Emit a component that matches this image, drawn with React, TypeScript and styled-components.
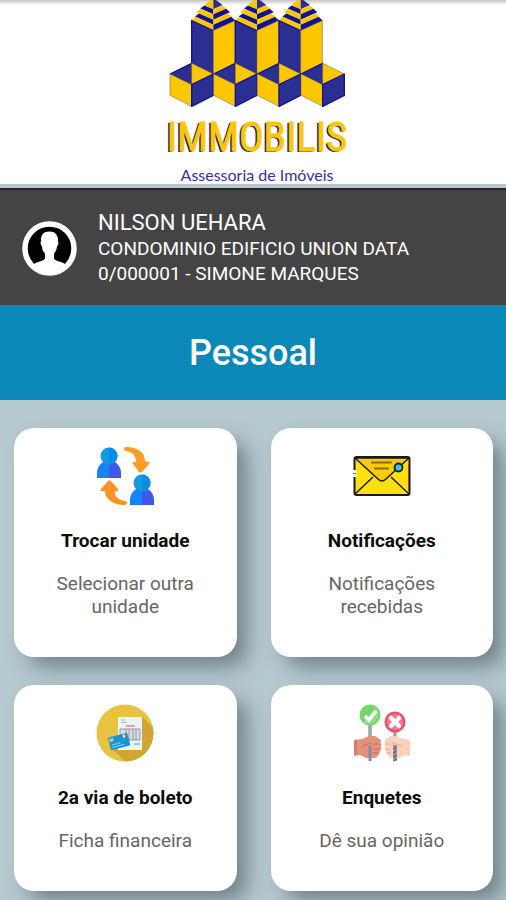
import React from "react";
import styled, { createGlobalStyle } from "styled-components";

const GlobalStyle = createGlobalStyle`
  *, *::before, *::after { box-sizing: border-box; }
  body {
    margin: 0;
    background: #b4c8d0;
    font-family: Roboto, "Liberation Sans", sans-serif;
  }
`;

const Screen = styled.div`
  display: flex;
  flex-direction: column;
  min-height: 100vh;
`;

const BrandBar = styled.header`
  display: flex;
  flex-direction: column;
  align-items: center;
  padding: 0 0 1px 8px;
  background: linear-gradient(#c4c4c4, #ffffff 5px);
`;

const LogoMark = styled.svg`
  display: block;
  width: 176px;
  height: 107px;
  flex: none;
`;

const Wordmark = styled.div`
  color: #fdc608;
  font-family: "Liberation Sans Narrow", "Roboto Condensed", "Open Sans Condensed", Roboto, sans-serif;
  font-size: 41px;
  line-height: 60px;
  -webkit-text-stroke: 1px #fdc608;
  text-shadow: -2px 1px 0 #25257f;
`;

const Tagline = styled.div`
  color: #34349b;
  font-family: Lato, sans-serif;
  font-size: 16px;
  line-height: 16px;
`;

const UserBar = styled.section`
  display: flex;
  align-items: center;
  gap: 21px;
  margin-top: 4px;
  padding: 20px 22px 19px;
  border-top: 2px solid #2b2829;
  background: #444444;
  color: #ffffff;
`;

const Avatar = styled.svg`
  width: 55px;
  height: 55px;
  flex: none;
`;

const UserName = styled.div`
  font-size: 22px;
  line-height: 26px;
`;

const UserDetail = styled.div`
  font-size: 19px;
  line-height: 25px;
`;

const SectionTitle = styled.h1`
  margin: 0;
  padding: 26px 16px 25px;
  background: #0a88b7;
  color: #ffffff;
  font-size: 36px;
  font-weight: 500;
  line-height: 44px;
  text-align: center;
`;

const CardGrid = styled.main`
  display: grid;
  grid-template-columns: 1fr 1fr;
  gap: 28px 34px;
  padding: 28px 13px 8px 14px;
`;

const Card = styled.button`
  display: flex;
  flex-direction: column;
  align-items: center;
  padding: 19px 32px 39px;
  border: 0;
  border-radius: 20px;
  background: #ffffff;
  box-shadow: 12px 12px 20px -2px rgba(60, 75, 82, 0.55);
  font-family: inherit;
  text-align: center;
  cursor: pointer;
`;

const CardIcon = styled.svg`
  width: 58px;
  height: 58px;
  flex: none;
`;

const CardTitle = styled.span`
  margin-top: 24px;
  color: #0c0c0c;
  font-size: 19px;
  font-weight: 700;
  line-height: 24px;
`;

const CardText = styled.span`
  margin-top: 19px;
  color: #666666;
  font-size: 19px;
  line-height: 23px;
`;

const BLUE = "#2c2f92";
const EDGE = "#14128a";
const YELLOW = "#fdc700";

const tiers = [
  { dx: 50, top: 28, bottom: 59 },
  { dx: 66, top: 59, bottom: 92 },
];

function Tower({ c }: { c: number }) {
  const band = (dir: number, dx: number, y1: number, y2: number) => {
    const rise = dx * 0.45;
    return `${c},${y1} ${c + dir * (dx - 12)},${y1 - rise + 6} ${c + dir * dx},${y2 - rise} ${c},${y2}`;
  };
  return (
    <g>
      <polygon points={`${c},-6 ${c - 28},15 ${c},28`} fill={YELLOW} />
      <polygon points={`${c},-6 ${c + 28},15 ${c},28`} fill={BLUE} />
      {tiers.map(({ dx, top, bottom }) => {
        const mid = top + 15;
        return (
          <g key={dx}>
            <polygon points={band(-1, dx - 11, top, mid)} fill={EDGE} />
            <polygon points={band(-1, dx, mid, bottom)} fill={YELLOW} />
            <polygon points={band(1, dx - 11, top, mid)} fill={YELLOW} />
            <polygon points={band(1, dx, mid, bottom)} fill={EDGE} />
          </g>
        );
      })}
      <polygon points={`${c - 65},62 ${c},92 ${c},222 ${c - 65},190`} fill={BLUE} stroke={EDGE} strokeWidth="4" />
      <polygon points={`${c},92 ${c + 65},62 ${c + 65},190 ${c},222`} fill={YELLOW} stroke="#8b7a4c" strokeWidth="2" />
    </g>
  );
}

function Cube({ c }: { c: number }) {
  return (
    <g strokeLinejoin="round">
      <polygon points={`${c - 65},222 ${c},190 ${c},254`} fill={BLUE} stroke={EDGE} strokeWidth="4" />
      <polygon points={`${c},190 ${c + 65},222 ${c},254`} fill={YELLOW} stroke="#8b7a4c" strokeWidth="2" />
      <polygon points={`${c - 65},222 ${c},254 ${c},319 ${c - 65},286`} fill={YELLOW} stroke="#8b7a4c" strokeWidth="2" />
      <polygon points={`${c},254 ${c + 65},222 ${c + 65},286 ${c},319`} fill={BLUE} stroke={EDGE} strokeWidth="4" />
    </g>
  );
}

function Person({ x, y }: { x: number; y: number }) {
  return (
    <g transform={`translate(${x} ${y})`}>
      <path d="M0 31V26C0 20 4 15 9 14h3v17z" fill="#1583fa" />
      <path d="M12 14h3c5 1 9 6 9 12v5H12z" fill="#3b5be6" />
      <circle cx="12" cy="9" r="8.500" fill="#119be4" />
      <path d="M12 .5a8.500 8.500 0 0 1 0 17z" fill="#0b8bea" />
    </g>
  );
}

function SwapIcon() {
  return (
    <CardIcon viewBox="0 0 58 58" aria-hidden="true">
      <Person x={1} y={0} />
      <Person x={34} y={27} />
      <path d="M28 2c0-2 2-2 4-2 11 1 17 6 17 14l3 1c2 0 2 1 1 2l-7 8c-1 1-2 1-3 0l-6-8c-1-1-1-2 1-2h2C40 8 36 5 30 4c-1 0-2-1-2-2z" fill="#fe9d25" />
      <path d="M31 56c0 2-2 2-4 2-12-1-18-7-18-14H6c-2 0-2-1-1-2l7-8c1-1 2-1 3 0l7 8c1 1 1 2-1 2h-2c-1 5 3 9 10 10 1 0 2 1 2 2z" fill="#fd9424" />
    </CardIcon>
  );
}

function EnvelopeIcon() {
  return (
    <CardIcon viewBox="0 0 58 58" aria-hidden="true">
      <rect x="1.500" y="10" width="55" height="38" rx="2" fill="#ffe00a" stroke="#171a22" strokeWidth="2" />
      <path d="M2 47l18-17M56 47L38 30" stroke="#171a22" strokeWidth="1.500" />
      <path d="M2 11l23 21q4 4 8 0l23-21z" fill="#fccb08" stroke="#171a22" strokeWidth="1.500" strokeLinejoin="round" />
      <path d="M19 15.500h19M22 21.500h13" stroke="#886d13" strokeWidth="2" strokeLinecap="round" />
      <circle cx="45.500" cy="20.500" r="4" fill="#35c4ef" stroke="#17202b" strokeWidth="1.800" />
      <path d="M1.500 23v7" stroke="#fff" strokeWidth="4" />
      <path d="M0 26.500h3" stroke="#777" strokeWidth="1" />
      <path d="M55.500 17v27" stroke="#b2402a" strokeWidth="1" />
    </CardIcon>
  );
}

function InvoiceIcon() {
  return (
    <CardIcon viewBox="0 0 58 58" aria-hidden="true">
      <defs>
        <clipPath id="disc"><circle cx="29" cy="29" r="28.500" /></clipPath>
      </defs>
      <circle cx="29" cy="29" r="28.500" fill="#e8c240" />
      <path d="M46 13L70 36 50 64 30 58 15 44z" fill="#cfa633" clipPath="url(#disc)" />
      <rect x="22" y="13" width="24" height="33" fill="#eef3f5" />
      <path d="M25 16h4M25 18.500h6" stroke="#a9b6bf" strokeWidth="1" />
      <path d="M30 22h9" stroke="#e58d83" strokeWidth="1.500" />
      <path d="M24 25h20v11H24zM30 25v11M33 25v11M37 25v11M40 25v11" fill="#d5dde2" stroke="#8e9ba7" strokeWidth="1" />
      <path d="M38 40h6" stroke="#62c5eb" strokeWidth="1.500" />
      <g transform="rotate(-15 23 37)">
        <rect x="13" y="31" width="20" height="13" rx="1" fill="#1795d9" />
        <rect x="14" y="32.500" width="4" height="3" fill="#b9d77b" />
        <path d="M28 32h2v3h-2z" fill="#fff" />
        <path d="M30 32h2v3h-2z" fill="#e0525a" />
        <path d="M15 39h9M15 41.500h12" stroke="#80d0f2" strokeWidth="1" />
      </g>
    </CardIcon>
  );
}

function PollIcon() {
  return (
    <CardIcon viewBox="0 0 58 58" aria-hidden="true">
      <path d="M17 19v15M42 25v10" stroke="#a0a4b1" strokeWidth="3.500" />
      <circle cx="17" cy="11" r="10.500" fill="#75d66c" />
      <path d="M23 3a10.500 10.500 0 0 1-13 16z" fill="#91df83" />
      <path d="M12 12l4 4 7-9" fill="none" stroke="#fff" strokeWidth="3.500" />
      <circle cx="42" cy="18" r="10.500" fill="#ea526b" />
      <circle cx="42" cy="18" r="8" fill="#f0798c" />
      <path d="M38 14l8 8M46 14l-8 8" stroke="#fff" strokeWidth="4.500" strokeLinecap="round" />
      <path d="M1 36l8-1 7-3h6l6 4q1 2-1 3 2 1 1 4 1 2-1 4 0 3-2 4-1 3-4 3h-8l-6-3-6 1z" fill="#e2917d" />
      <path d="M1 36l3 1v13l-3 1z" fill="#d77c69" />
      <path d="M9 42l9-3 1 2M21 40h6M21 45h6M20 49h5" fill="none" stroke="#c86f62" strokeWidth="1" />
      <path d="M57 36l-7-1-8-3h-5l-5 4q-1 2 0 3-1 2 0 4-1 2 1 4 0 3 2 4 1 3 4 3h7l6-3 5 1z" fill="#fbd1ba" />
      <path d="M49 42l-9-3-1 2M37 40h-5M37 45h-5M38 49h-4" fill="none" stroke="#e9ac96" strokeWidth="1" />
      <path d="M17 42v15" stroke="#85899a" strokeWidth="3" />
      <path d="M42 41v16" stroke="#85899a" strokeWidth="3.500" />
      <path d="M40 45l4-2M40 49l4-2M40 53l4-2M40 57l4-2" stroke="#5d6376" strokeWidth="1" />
    </CardIcon>
  );
}

const actions = [
  { title: "Trocar unidade", text: "Selecionar outra unidade", icon: <SwapIcon /> },
  { title: "Notificações", text: "Notificações recebidas", icon: <EnvelopeIcon /> },
  { title: "2a via de boleto", text: "Ficha financeira", icon: <InvoiceIcon /> },
  { title: "Enquetes", text: "Dê sua opinião", icon: <PollIcon /> },
];

export default function App() {
  return (
    <Screen>
      <GlobalStyle />
      <BrandBar>
        <LogoMark viewBox="39 0 528 321" aria-hidden="true">
          {[172, 303, 434].map((c) => <Tower key={c} c={c} />)}
          {[107, 238, 369, 500].map((c) => <Cube key={c} c={c} />)}
        </LogoMark>
        <Wordmark>IMMOBILIS</Wordmark>
        <Tagline>Assessoria de Imóveis</Tagline>
      </BrandBar>
      <UserBar>
        <Avatar viewBox="0 0 55 55" aria-hidden="true">
          <circle cx="27.500" cy="27.500" r="24.500" fill="#000" stroke="#fff" strokeWidth="5.500" />
          <path d="M27.500 10.500c6 0 9 4 8.500 10 1 1 0 4-1 5-.5 4-2 6-3 7v5c1 3 9 3 11.500 6-7 9-25 9-32 0 3-3 10-3 11.500-6v-5c-1-1-3-3-3-7-1-1-2-4-1-5-.5-6 2-10 8.500-10z" fill="#fff" />
        </Avatar>
        <div>
          <UserName>NILSON UEHARA</UserName>
          <UserDetail>CONDOMINIO EDIFICIO UNION DATA</UserDetail>
          <UserDetail>0/000001 - SIMONE MARQUES</UserDetail>
        </div>
      </UserBar>
      <SectionTitle>Pessoal</SectionTitle>
      <CardGrid>
        {actions.map(({ title, text, icon }) => (
          <Card key={title} type="button">
            {icon}
            <CardTitle>{title}</CardTitle>
            <CardText>{text}</CardText>
          </Card>
        ))}
      </CardGrid>
    </Screen>
  );
}
